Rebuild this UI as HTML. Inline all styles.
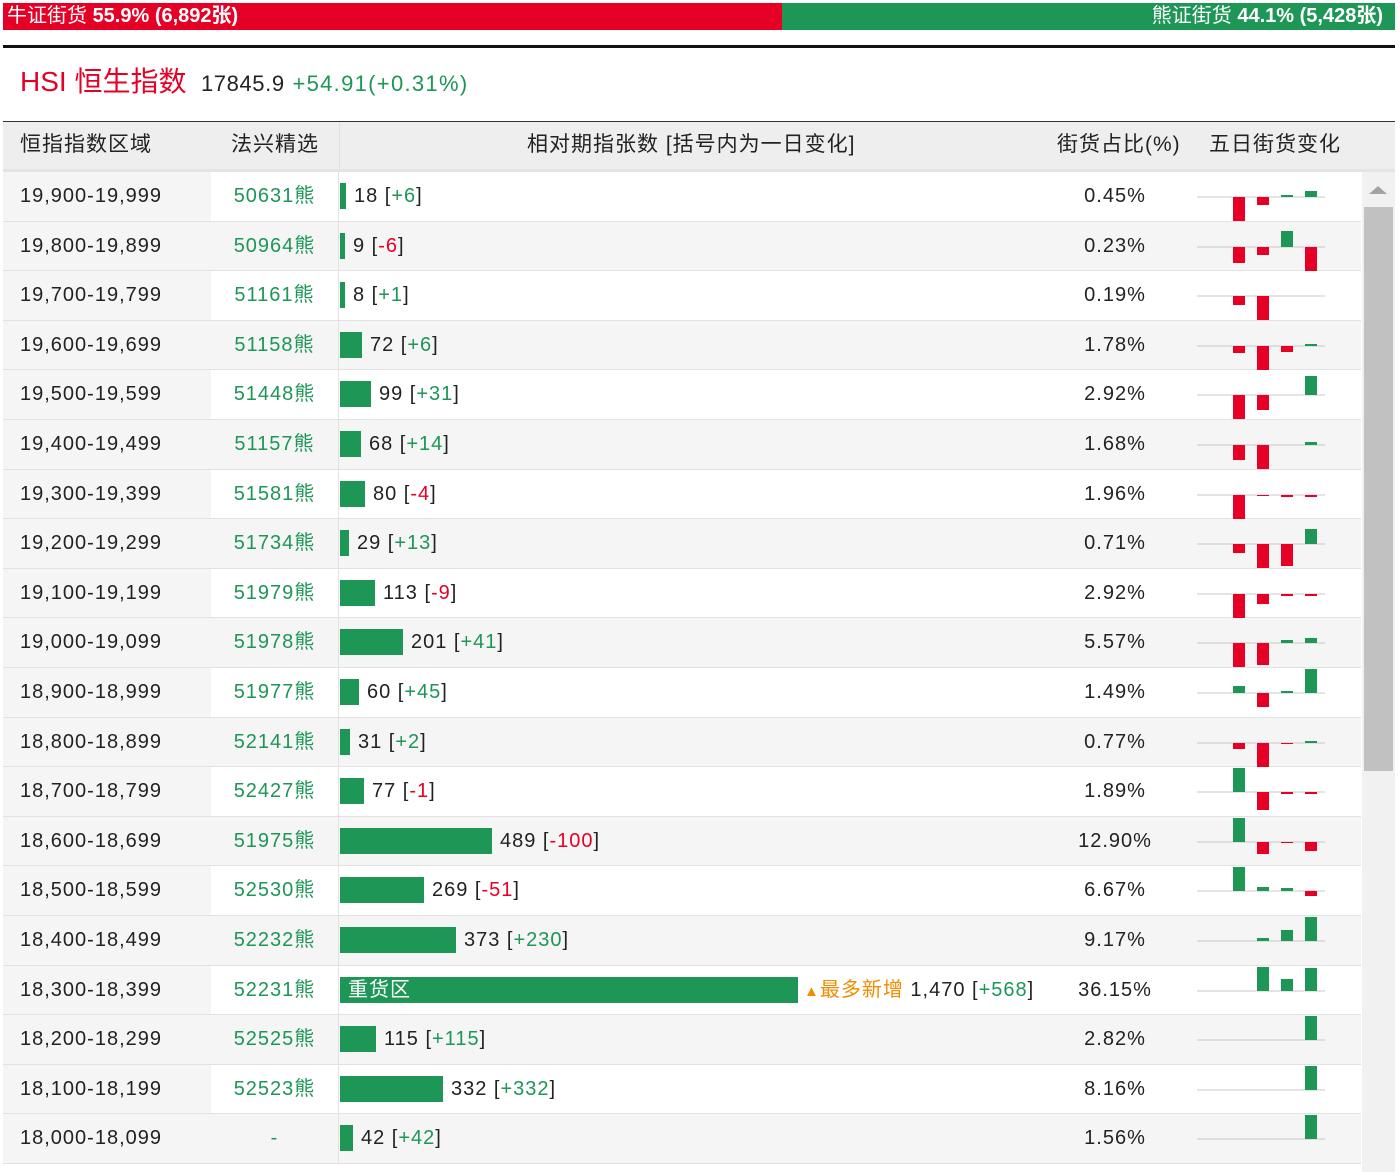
<!DOCTYPE html>
<html><head><meta charset="utf-8"><style>
*{margin:0;padding:0;box-sizing:border-box}
body{width:1400px;height:1174px;background:#fff;font-family:"Liberation Sans","Noto Sans CJK SC",sans-serif;position:relative;overflow:hidden;color:#222}
.abs{position:absolute}
.g{color:#1d9656}.r{color:#e60026}
.row{position:absolute;left:3px;width:1358px;height:49.6px;border-bottom:1px solid #e2e2e2;font-size:20px;letter-spacing:1px}
.row.e{background:#f5f5f5}
.row .c1{position:absolute;left:0;top:0;width:208px;height:100%;background:#f5f5f5;padding-left:17px;line-height:48px}
.row .c2{position:absolute;left:208px;top:0;width:128px;height:100%;line-height:48px;text-align:center;color:#1d9656;border-right:1px solid #e2e2e2}
.row .bar{position:absolute;left:337px;top:11px;height:26px;background:#1d9656}
.row .t{position:absolute;top:0;line-height:48px}
.row .p{position:absolute;left:1052px;width:120px;text-align:center;top:0;line-height:48px}
.row svg{position:absolute;left:1194px;top:0}
</style></head><body>
<div class="abs" style="left:3px;top:3px;width:779px;height:27px;background:#e60026;color:#fff;font-size:20px;line-height:27px;padding-left:4px">牛证街货 <b>55.9% (6,892张)</b></div>
<div class="abs" style="left:782px;top:3px;width:613px;height:27px;background:#1d9656;color:#fff;font-size:20px;line-height:27px;text-align:right;padding-right:12px">熊证街货 <b>44.1% (5,428张)</b></div>
<div class="abs" style="left:3px;top:45px;width:1392px;height:3px;background:#111"></div>
<div class="abs" style="left:20px;top:64px;font-size:28px;color:#e60026;line-height:36px;white-space:nowrap">HSI 恒生指数 <span style="font-size:22px;color:#222;letter-spacing:0.6px">&nbsp;17845.9</span> <span style="font-size:22px;color:#1d9656;letter-spacing:1.3px">+54.91(+0.31%)</span></div>
<div class="abs" style="left:3px;top:121px;width:1392px;height:1px;background:#333"></div>
<div class="abs" style="left:3px;top:122px;width:1392px;height:50px;background:#eeeeee;border-bottom:3px solid #e4e4e4;font-size:21px;line-height:46px;letter-spacing:1px;white-space:nowrap">
<span class="abs" style="left:17px">恒指指数区域</span>
<span class="abs" style="left:228px">法兴精选</span>
<span class="abs" style="left:336px;top:0;height:47px;border-left:1px solid #e0e0e0"></span>
<span class="abs" style="left:524px">相对期指张数 [括号内为一日变化]</span>
<span class="abs" style="left:1054px">街货占比(%)</span>
<span class="abs" style="left:1206px">五日街货变化</span>
</div>
<div class="abs" style="left:1362px;top:172px;width:33px;height:1000px;background:#f1f1f1"></div>
<div class="abs" style="left:1369px;top:186px;width:0;height:0;border-left:9px solid transparent;border-right:9px solid transparent;border-bottom:8px solid #a3a3a3"></div>
<div class="abs" style="left:1364px;top:207px;width:29px;height:564px;background:#c1c1c1"></div>
<div id="rows"></div>
<script>
var d=[
["19,900-19,999","50631",18,"+6","0.45%",[-24,-8,2,6]],
["19,800-19,899","50964",9,"-6","0.23%",[-16,-8,16,-24]],
["19,700-19,799","51161",8,"+1","0.19%",[-9,-24,0,0]],
["19,600-19,699","51158",72,"+6","1.78%",[-7,-24,-6,2]],
["19,500-19,599","51448",99,"+31","2.92%",[-24,-15,0,19]],
["19,400-19,499","51157",68,"+14","1.68%",[-15,-24,0,3]],
["19,300-19,399","51581",80,"-4","1.96%",[-24,-1,-2,-2]],
["19,200-19,299","51734",29,"+13","0.71%",[-9,-24,-22,15]],
["19,100-19,199","51979",113,"-9","2.92%",[-24,-10,-2,-2]],
["19,000-19,099","51978",201,"+41","5.57%",[-24,-22,3,5]],
["18,900-18,999","51977",60,"+45","1.49%",[7,-14,2,24]],
["18,800-18,899","52141",31,"+2","0.77%",[-6,-24,-1,2]],
["18,700-18,799","52427",77,"-1","1.89%",[24,-18,-2,-2]],
["18,600-18,699","51975",489,"-100","12.90%",[24,-12,-1,-9]],
["18,500-18,599","52530",269,"-51","6.67%",[24,4,3,-5]],
["18,400-18,499","52232",373,"+230","9.17%",[0,3,11,24]],
["18,300-18,399","52231",1470,"+568","36.15%",[0,24,12,23]],
["18,200-18,299","52525",115,"+115","2.82%",[0,0,0,24]],
["18,100-18,199","52523",332,"+332","8.16%",[0,0,0,24]],
["18,000-18,099","-",42,"+42","1.56%",[0,0,0,24]]];
var h="";
d.forEach(function(r,i){
var top=172+i*49.6;var w=Math.max(5,Math.round(r[2]*0.3116));
var cls=r[3][0]=="-"?"r":"g";
var num=r[2]>=1000?"1,470":r[2];
h+='<div class="row'+(i%2?' e':'')+'" style="top:'+top+'px">';
h+='<div class="c1">'+r[0]+'</div>';
h+='<div class="c2">'+r[1]+(r[1]=="-"?'':'熊')+'</div>';
if(i==16){
h+='<div class="bar" style="width:'+w+'px;color:#fff;line-height:26px;padding-left:8px">重货区</div>';
h+='<div class="t" style="left:'+(337+w+6)+'px;color:#f08c00;white-space:nowrap"><span style="font-size:15px">▲</span>最多新增 <span style="color:#222">'+num+' [<span class="'+cls+'">'+r[3]+'</span>]</span></div>';
}else{
h+='<div class="bar" style="width:'+w+'px"></div>';
h+='<div class="t" style="left:'+(337+w+8)+'px">'+num+' [<span class="'+cls+'">'+r[3]+'</span>]</div>';
}
h+='<div class="p">'+r[4]+'</div>';
var s='<svg width="130" height="50"><line x1="0" y1="25" x2="128" y2="25" stroke="#c8c8c8" stroke-width="1"/>';
r[5].forEach(function(v,j){var x=36+j*24;if(v>0)s+='<rect x="'+x+'" y="'+(25-v)+'" width="12" height="'+v+'" fill="#1d9656"/>';else if(v<0)s+='<rect x="'+x+'" y="25" width="12" height="'+(-v)+'" fill="#e60026"/>';});
h+=s+'</svg></div>';
});
document.getElementById("rows").innerHTML=h;
</script>
</body></html>
